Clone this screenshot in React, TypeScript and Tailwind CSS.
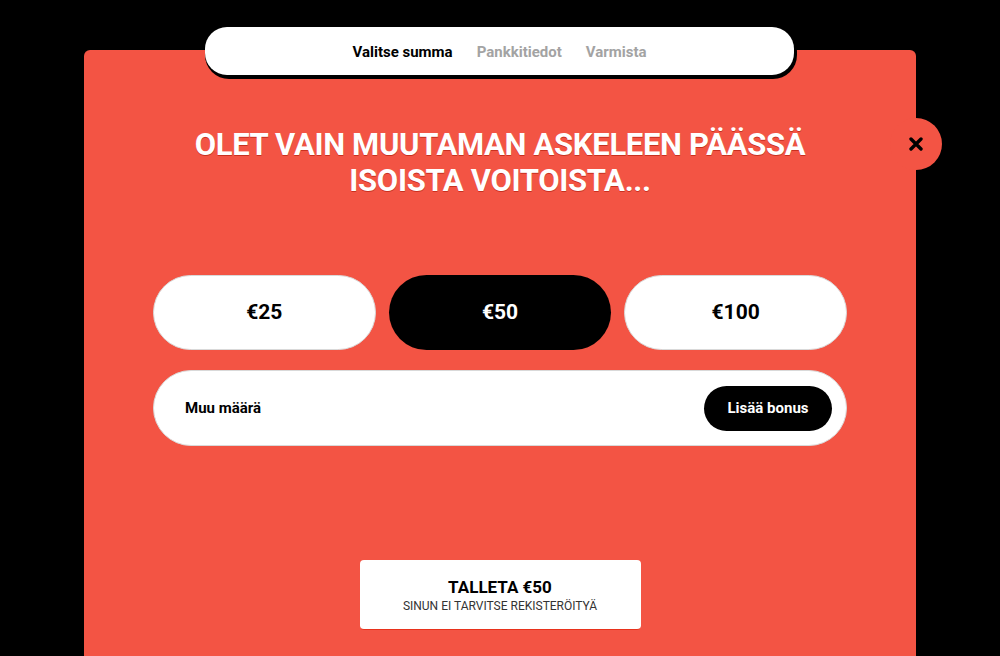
import React, { useState } from 'react';

const amounts = [25, 50, 100];

const steps = [
  { label: 'Valitse summa', active: true },
  { label: 'Pankkitiedot', active: false },
  { label: 'Varmista', active: false },
];

const App = () => {
  const [selected, setSelected] = useState(50);

  return (
    <div
      className="h-[656px] bg-black flex justify-center overflow-hidden"
      style={{ fontFamily: 'Roboto, "Liberation Sans", sans-serif' }}
    >
      <div className="relative mt-[50px] w-[832px] h-[606px] rounded-t-md bg-[#f35444]">
        {/* step indicator */}
        <div className="absolute -top-[23px] left-[121px] w-[592px] h-[52px] rounded-[24px] bg-black pr-[3px] pb-[4px]">
          <div className="flex h-full items-center justify-center gap-[24px] rounded-[22px] bg-white pt-[2px] text-[15px] font-bold">
            {steps.map((s) => (
              <span key={s.label} className={s.active ? 'text-black' : 'text-[#a3a3a3]'}>
                {s.label}
              </span>
            ))}
          </div>
        </div>

        {/* close */}
        <button className="absolute top-[68px] -right-[26px] flex h-[52px] w-[52px] items-center justify-center rounded-full bg-[#f35444]">
          <svg width="14" height="14" viewBox="0 0 14 14">
            <path d="M2 2 L12 12 M12 2 L2 12" stroke="black" strokeWidth="3.4" strokeLinecap="round" />
          </svg>
        </button>

        <div className="flex flex-col items-center px-[69px] pt-[77px]">
          <h1 className="text-center text-[31px] font-bold uppercase leading-[36px] tracking-[-0.01em] text-white [text-shadow:0_1px_0_#c8301f]">
            Olet vain muutaman askeleen päässä
            <br />
            isoista voitoista...
          </h1>

          <div className="mt-[76px] grid w-full grid-cols-3 gap-[13px]">
            {amounts.map((a) => (
              <button
                key={a}
                onClick={() => setSelected(a)}
                className={
                  'h-[75px] rounded-full text-[21px] font-bold ' +
                  (selected === a
                    ? 'bg-black text-white'
                    : 'bg-white text-black border border-[#d9d9d9]')
                }
              >
                €{a}
              </button>
            ))}
          </div>

          <div className="mt-[20px] flex h-[76px] w-full items-center justify-between rounded-full border border-[#d9d9d9] bg-white pl-[31px] pr-[14px]">
            <span className="text-[15px] font-bold text-black">Muu määrä</span>
            <button className="h-[45px] w-[128px] rounded-full bg-black text-[15px] font-bold text-white">
              Lisää bonus
            </button>
          </div>

          <button className="mt-[114px] flex h-[70px] w-[281px] flex-col items-center justify-center rounded border-b border-[#e8321c] bg-white">
            <span className="text-[17px] font-bold leading-[22px] text-black">TALLETA €{selected}</span>
            <span className="text-[12px] leading-[16px] text-[#333]">SINUN EI TARVITSE REKISTERÖITYÄ</span>
          </button>
        </div>
      </div>
    </div>
  );
};

export default App;
